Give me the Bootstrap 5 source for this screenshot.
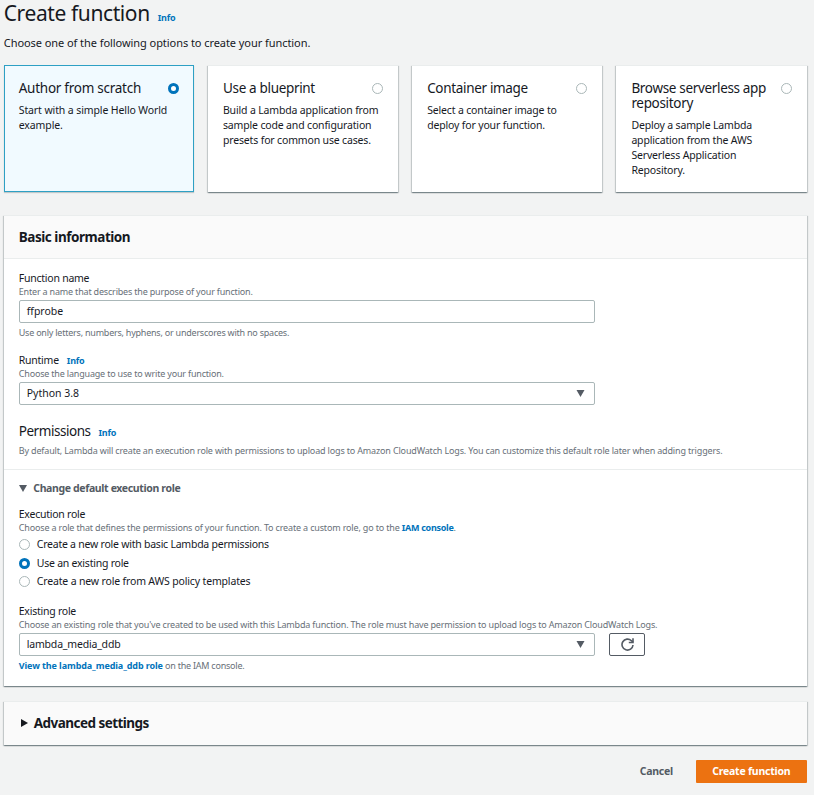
<!DOCTYPE html>
<html lang="en">
<head>
<meta charset="utf-8">
<meta name="viewport" content="width=device-width, initial-scale=1">
<title>Create function</title>
<link href="https://cdn.jsdelivr.net/npm/bootstrap@5.3.0/dist/css/bootstrap.min.css" rel="stylesheet">
<style>
body{background:#f2f3f3;color:#16191f;font:10.5px/15px "Noto Sans",sans-serif;height:795px;overflow:hidden}
.page{padding:0 7.4px 0 3.75px}
h1{font-size:21px;line-height:27px;font-weight:400;letter-spacing:-.4px}
.info{font-size:9px;line-height:12px;font-weight:700;color:#0073bb;text-decoration:none;margin-left:8px;letter-spacing:-.2px}
.intro{margin-top:8px;font-size:11px;letter-spacing:-.06px}
.tiles{display:grid;grid-template-columns:repeat(4,1fr);gap:14px;margin-top:15px}
.tile,.panel{background:#fff;box-shadow:0 1px 1px 0 rgba(0,28,36,.3),1px 1px 1px 0 rgba(0,28,36,.15),-1px 1px 1px 0 rgba(0,28,36,.15);border-top:1px solid #eaeded}
.tile{height:127px;padding:15px 15px 14px;letter-spacing:-.16px}
.tile.on{background:#f1faff;border:1px solid #2ea0c4;padding:15px 14px 14px;box-shadow:0 1px 1px 0 rgba(0,28,36,.2)}
.tile h2{font-size:13.5px;line-height:15px;font-weight:400;margin-bottom:7px;letter-spacing:-.33px}
.tile.on h2{letter-spacing:-.26px}
.tile.on p{letter-spacing:-.11px}
.dot{flex:none;width:11px;height:11px;border:1px solid #aab7b8;border-radius:50%;background:#fff}
.dot.on{border:3.5px solid #0073bb}
.tile .dot{margin-top:2px}
.panel h2{font-size:13.5px;line-height:15px;font-weight:700;margin:0;letter-spacing:-.46px}
.basic{margin-top:23px}
.panel-head{background:#fafafa;border-bottom:1px solid #eaeded;padding:14px 15px;height:43px}
.panel h3{font-size:13.5px;line-height:15px;font-weight:400;margin:0;letter-spacing:-.46px}
.panel-part{padding:12px 15px}
.panel-part + .panel-part{border-top:1px solid #eaeded;padding:11px 15px 14px}
.form-label{display:block;margin:0;letter-spacing:-.24px}
.hint{font-size:9px;line-height:12px;color:#687078;letter-spacing:-.162px}
.hint a{color:#0073bb;font-weight:700;text-decoration:none}
.tight{letter-spacing:-.187px}
.tighter{letter-spacing:-.228px}
.role-hint{letter-spacing:-.17px}
.view-link{letter-spacing:-.1px}
.iam-link{letter-spacing:-.28px}
.group{margin-top:15px}
.below{margin-top:3.5px}
.field{width:576px;height:23px;border:1px solid #aab7b8;border-radius:2px;padding:0 9px 0 7px;margin-top:2px;background:#fff;letter-spacing:-.02px}
.field.role{letter-spacing:-.19px}
.field + .below{margin-top:4px;margin-bottom:-1px}
.perm{margin-top:19px}
.perm-text{margin-top:6px}
.toggle{color:#545b64;font-weight:700;gap:6.5px;letter-spacing:-.36px}
.exec{margin-top:11px}
.roles{display:grid;row-gap:3.67px;margin-top:3px;letter-spacing:-.235px}
.roles label{gap:7px}
.roles .wide{letter-spacing:-.16px}
.refresh{width:36px;height:23px;margin:2px 0 0 14.4px;border:1px solid #545b64;border-radius:2px;background:#fff}
.advanced{margin-top:15px;height:44px;background:#fafafa;padding:0 15px 0 17px;gap:6px}
.panel.advanced h2{letter-spacing:-.54px}
.page .btn{font-size:10.5px;line-height:15px;font-weight:700;border-radius:1px;border:0;height:23px;padding:0;letter-spacing:-.22px}
.page .go{background:#ec7211;color:#fff;width:110.6px}
.page .cancel{color:#545b64;margin-right:23px}
.actions{margin-top:15px}
svg{display:block;flex:none}
</style>
<script src="https://cdn.jsdelivr.net/npm/bootstrap@5.3.0/dist/js/bootstrap.bundle.min.js"></script>
</head>
<body>
<main class="page">
  <div class="d-flex align-items-baseline"><h1 class="m-0">Create function</h1><a class="info" href="#">Info</a></div>
  <p class="intro mb-0">Choose one of the following options to create your function.</p>

  <div class="tiles">
    <div class="tile on">
      <div class="d-flex justify-content-between"><h2>Author from scratch</h2><span class="dot on"></span></div>
      <p class="m-0">Start with a simple Hello World<br>example.</p>
    </div>
    <div class="tile">
      <div class="d-flex justify-content-between"><h2>Use a blueprint</h2><span class="dot"></span></div>
      <p class="m-0">Build a Lambda application from<br>sample code and configuration<br>presets for common use cases.</p>
    </div>
    <div class="tile">
      <div class="d-flex justify-content-between"><h2>Container image</h2><span class="dot"></span></div>
      <p class="m-0">Select a container image to<br>deploy for your function.</p>
    </div>
    <div class="tile">
      <div class="d-flex justify-content-between"><h2>Browse serverless app<br>repository</h2><span class="dot"></span></div>
      <p class="m-0">Deploy a sample Lambda<br>application from the AWS<br>Serverless Application<br>Repository.</p>
    </div>
  </div>

  <section class="panel basic">
    <div class="panel-head"><h2>Basic information</h2></div>
    <div class="panel-part">
      <label class="form-label">Function name</label>
      <div class="hint tight">Enter a name that describes the purpose of your function.</div>
      <div class="field d-flex align-items-center">ffprobe</div>
      <div class="hint tighter below">Use only letters, numbers, hyphens, or underscores with no spaces.</div>

      <div class="group d-flex align-items-baseline"><label class="form-label">Runtime</label><a class="info" href="#">Info</a></div>
      <div class="hint tight">Choose the language to use to write your function.</div>
      <div class="field d-flex align-items-center justify-content-between">Python 3.8<svg width="9" height="7" viewBox="0 0 9 7"><path d="M.5 0h8L4.500 7z" fill="#545b64"/></svg></div>

      <div class="perm d-flex align-items-baseline"><h3>Permissions</h3><a class="info" href="#">Info</a></div>
      <div class="hint perm-text">By default, Lambda will create an execution role with permissions to upload logs to Amazon CloudWatch Logs. You can customize this default role later when adding triggers.</div>
    </div>
    <div class="panel-part">
      <div class="toggle d-flex align-items-center"><svg width="8" height="7" viewBox="0 0 8 7"><path d="M0 0h8L4 7z" fill="#545b64"/></svg>Change default execution role</div>
      <label class="form-label exec">Execution role</label>
      <div class="hint">Choose a role that defines the permissions of your function. To create a custom role, go to the <a class="iam-link" href="#">IAM console</a>.</div>
      <div class="roles">
        <label class="d-flex align-items-center"><span class="dot"></span>Create a new role with basic Lambda permissions</label>
        <label class="d-flex align-items-center"><span class="dot on"></span>Use an existing role</label>
        <label class="wide d-flex align-items-center"><span class="dot"></span>Create a new role from AWS policy templates</label>
      </div>

      <label class="form-label group">Existing role</label>
      <div class="hint role-hint">Choose an existing role that you've created to be used with this Lambda function. The role must have permission to upload logs to Amazon CloudWatch Logs.</div>
      <div class="d-flex">
        <div class="field role d-flex align-items-center justify-content-between">lambda_media_ddb<svg width="9" height="7" viewBox="0 0 9 7"><path d="M.5 0h8L4.500 7z" fill="#545b64"/></svg></div>
        <button type="button" class="refresh d-flex align-items-center justify-content-center p-0" aria-label="Refresh"><svg width="13" height="13" viewBox="0 0 13 13" fill="none" stroke="#545b64" stroke-width="1.6"><path d="M12 7A5.500 5.500 0 1 1 10.400 2.700L12 4.200"/><path d="M12 .3v4.200H7.800"/></svg></button>
      </div>
      <div class="hint tighter below"><a class="view-link" href="#">View the lambda_media_ddb role</a> on the IAM console.</div>
    </div>
  </section>

  <section class="panel advanced d-flex align-items-center">
    <svg width="7" height="8" viewBox="0 0 7 8"><path d="M0 0v8l7-4z" fill="#16191f"/></svg><h2>Advanced settings</h2>
  </section>

  <div class="actions d-flex justify-content-end">
    <button type="button" class="btn cancel">Cancel</button>
    <button type="button" class="btn go">Create function</button>
  </div>
</main>
</body></html>
